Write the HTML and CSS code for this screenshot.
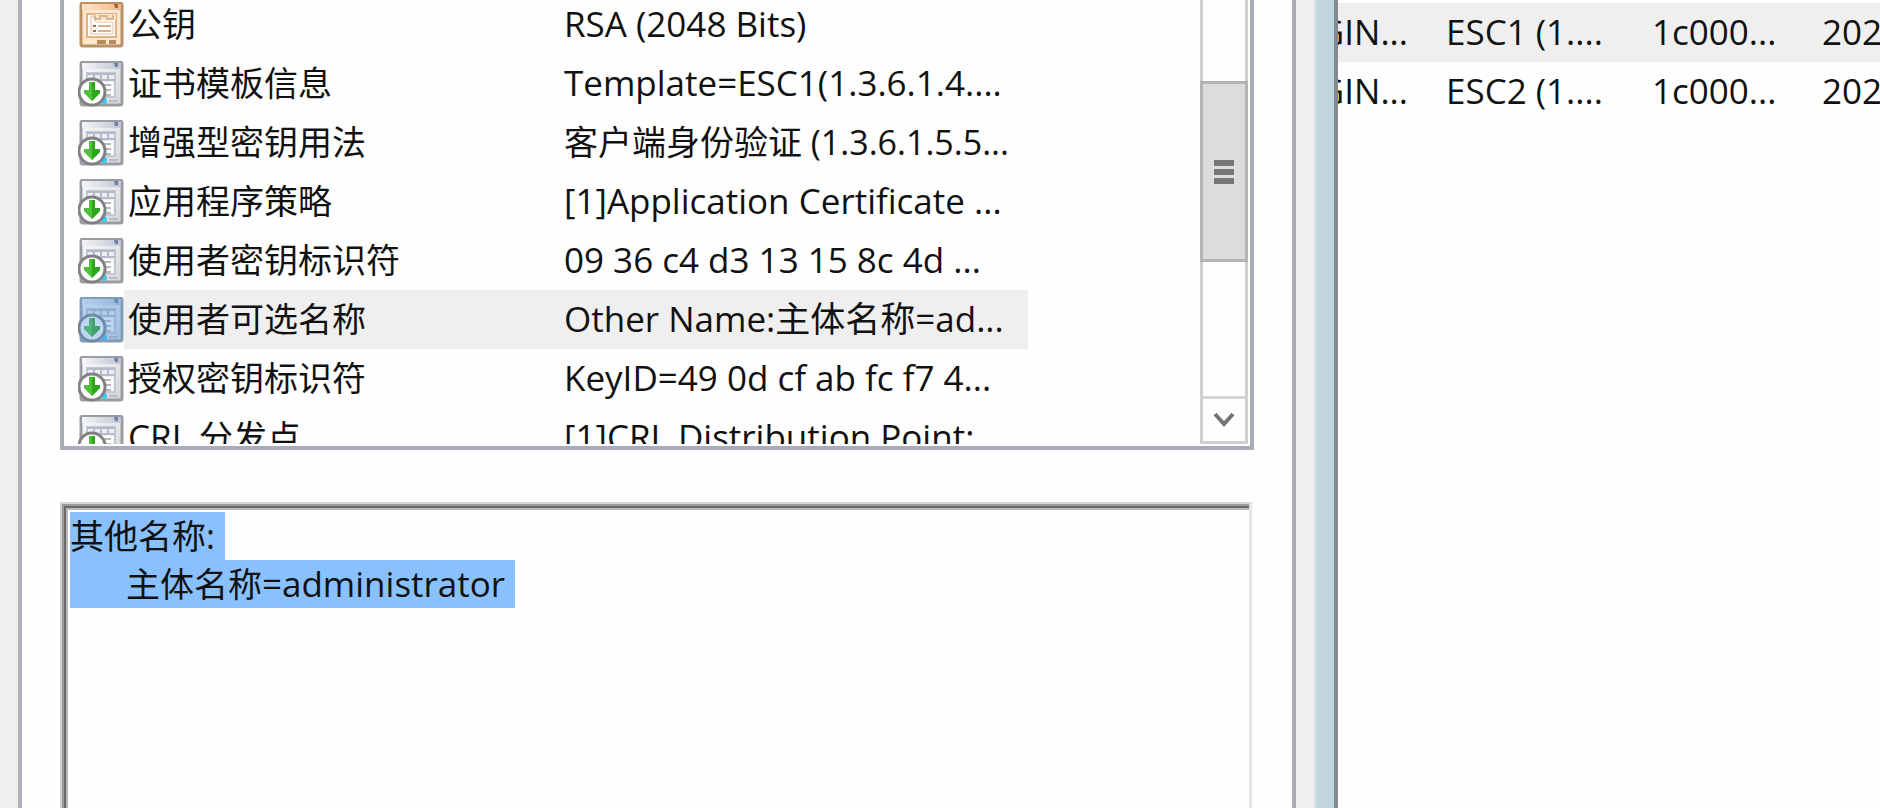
FILE: index.html
```html
<!DOCTYPE html>
<html lang="zh-CN">
<head>
<meta charset="utf-8">
<title>证书</title>
<link rel="stylesheet" href="styles.css">
</head>
<body>
<svg class="symbols" aria-hidden="true">
  <defs>
    <linearGradient id="greyBar" x1="0" y1="0" x2="1" y2="0"><stop offset="0" stop-color="#f4f5f7"/><stop offset="1" stop-color="#bfc5d2"/></linearGradient>
    <linearGradient id="greyBody" x1="0" y1="0" x2="1" y2="1"><stop offset="0" stop-color="#fafafa"/><stop offset="1" stop-color="#d3d5d8"/></linearGradient>
    <linearGradient id="orangeBar" x1="0" y1="0" x2="1" y2="0"><stop offset="0" stop-color="#fde3c8"/><stop offset="1" stop-color="#f3b98a"/></linearGradient>
    <symbol id="ext" viewBox="0 0 46 46">
      <rect x="3" y="1" width="41" height="43" rx="2" fill="url(#greyBody)" stroke="#999da2" stroke-width="3"/>
      <rect x="4" y="2" width="39" height="6" fill="url(#greyBar)"/>
      <path d="M36 2h4v4h-3z" fill="#6c7fa6"/>
      <path d="M9 12h28v24H9z" fill="#eceef1" stroke="#c3c8d2" stroke-width="2"/>
      <path d="M9 13h28M9 19h28M16 12v7M23 12v7M30 12v7" fill="none" stroke="#b4bac9" stroke-width="2"/>
      <path d="M24 21h11v14H22z" fill="#fff"/>
      <path d="M26 24h7M27 29h6M26 34h7" stroke="#b5b8bd" stroke-width="2"/>
      <path d="M31 40h9" stroke="#b9bcc0" stroke-width="2"/>
      <circle cx="26" cy="40" r="3" fill="#35cdf5"/>
      <circle cx="14" cy="31" r="13" fill="#fff" stroke="#7f8183" stroke-width="3"/>
      <path d="M11 21h6v8h5v3l-8 8-8-8v-3h5z" fill="#4fc136"/>
      <path d="M14 21h3v8h5v3l-8 8z" fill="#2fa51f"/>
    </symbol>
    <symbol id="prop" viewBox="0 0 46 46">
      <rect x="3" y="1" width="41" height="43" rx="2" fill="#fbe6d0" stroke="#b98f63" stroke-width="3"/>
      <rect x="4" y="2" width="39" height="6" fill="url(#orangeBar)"/>
      <path d="M36 2h4v4h-3z" fill="#a06b3c"/>
      <path d="M9 12h29v23H9z" fill="#fff" stroke="#dfb184" stroke-width="2"/>
      <path d="M16 12h22v6H18z" fill="#fae3cc"/>
      <path d="M13 14v18h22V20H18l-3-6z" fill="none" stroke="#e6bd95" stroke-width="1"/>
      <path d="M17 13v4h5v-3h7v3h6v-4" fill="none" stroke="#e0b48a" stroke-width="2"/>
      <path d="M20 24h13M20 29h13" stroke="#dcb185" stroke-width="2"/>
      <path d="M15 24h3M15 29h3" stroke="#a96e37" stroke-width="2"/>
      <path d="M19 40h9M31 40h7" stroke="#b98a5c" stroke-width="4"/>
    </symbol>
  </defs>
</svg>
<div class="screen">
  <section class="dialog">
    <div class="page">
      <div class="list">
        <div class="list-view">
          <table class="fields">
            <tbody>
              <tr><td class="name"><svg class="icon"><use href="#prop"/></svg><span>公钥</span></td><td class="value latin">RSA (2048 Bits)</td></tr>
              <tr><td class="name"><svg class="icon"><use href="#ext"/></svg><span>证书模板信息</span></td><td class="value latin">Template=ESC1(1.3.6.1.4....</td></tr>
              <tr><td class="name"><svg class="icon"><use href="#ext"/></svg><span>增强型密钥用法</span></td><td class="value">客户端身份验证 (1.3.6.1.5.5...</td></tr>
              <tr><td class="name"><svg class="icon"><use href="#ext"/></svg><span>应用程序策略</span></td><td class="value latin">[1]Application Certificate ...</td></tr>
              <tr><td class="name"><svg class="icon"><use href="#ext"/></svg><span>使用者密钥标识符</span></td><td class="value latin">09 36 c4 d3 13 15 8c 4d ...</td></tr>
              <tr class="selected"><td class="name"><svg class="icon"><use href="#ext"/><rect class="tint" x="2" width="43" height="45" rx="2"/></svg><span>使用者可选名称</span></td><td class="value latin">Other Name:主体名称=ad...</td></tr>
              <tr><td class="name"><svg class="icon"><use href="#ext"/></svg><span>授权密钥标识符</span></td><td class="value latin">KeyID=49 0d cf ab fc f7 4...</td></tr>
              <tr><td class="name"><svg class="icon"><use href="#ext"/></svg><span><span class="latin">CRL </span>分发点</span></td><td class="value latin">[1]CRL Distribution Point:</td></tr>
            </tbody>
          </table>
        </div>
        <div class="scrollbar">
          <div class="track">
            <div class="thumb"><i></i><i></i><i></i></div>
          </div>
          <button class="down" aria-label="向下滚动"><svg class="chevron" viewBox="0 0 22 16"><path d="M2 2l9 10 9-10" fill="none" stroke="#767676" stroke-width="4"/></svg></button>
        </div>
      </div>
      <div class="detail" role="textbox" aria-readonly="true" aria-multiline="true" aria-label="其他名称" tabindex="0">
        <div class="line"><span class="marked">其他名称:</span></div>
        <div class="line"><span class="marked indent">主体名称<span class="latin">=administrator</span></span></div>
      </div>
    </div>
    <div class="edge"></div>
    <div class="frame"></div>
  </section>
  <section class="issued">
    <table class="certs latin">
      <tbody>
        <tr class="selected"><td class="who"><div>GIN...</div></td><td class="tpl">ESC1 (1....</td><td class="serial">1c000...</td><td>202</td></tr>
        <tr><td class="who"><div>GIN...</div></td><td class="tpl">ESC2 (1....</td><td class="serial">1c000...</td><td>202</td></tr>
      </tbody>
    </table>
  </section>
</div>
</body>
</html>
```
FILE: styles.css
```css
* { box-sizing: border-box; }

body {
  margin: 0;
  background: #fefefe;
  color: #111;
  font-family: "Open Sans", "Noto Sans CJK SC", sans-serif;
  font-size: 34px;
  line-height: 48px;
  overflow: hidden;
}

.symbols { position: absolute; width: 0; height: 0; }

.latin { font-size: 35px; }

.screen {
  display: grid;
  grid-template-columns: minmax(0, 1338fr) minmax(0, 542fr);
  height: 100vh;
}

.dialog {
  display: flex;
  min-height: 0;
  border-left: 18px solid #efefef;
}

.page {
  display: flex;
  flex-direction: column;
  flex: 1;
  min-width: 0;
  padding: 0 38px;
  border-left: 4px solid #b0b1b8;
  border-right: 4px solid #acacb2;
}

.edge { width: 18px; background: #efefef; }

.frame {
  width: 24px;
  background: #c1d5dc;
  border-left: 2px solid #d9e2e6;
  border-right: 4px solid #85888e;
}

.list {
  display: flex;
  height: 450px;
  border: 4px solid #a9adb7;
  border-top: 0;
  padding: 0 2px 2px 0;
}

.list-view { flex: 1; min-width: 0; height: 444px; overflow: hidden; }

table { border-collapse: collapse; }

.fields { width: 964px; margin-top: -5px; }

td { height: 59px; padding: 0 0 2px; white-space: nowrap; }

.name {
  display: flex;
  align-items: center;
  gap: 4px;
  width: 500px;
  padding: 0 0 0 14px;
}

.name > span { padding-bottom: 2px; }

.value { width: 464px; }

.selected { background: #efefef; }

.fields .selected { background: linear-gradient(90deg, #fefefe 60px, #efefef 60px); }

.icon { width: 46px; height: 46px; flex: none; }

.tint { fill: #5b9be0; opacity: 0.4; }

.scrollbar {
  display: flex;
  flex-direction: column;
  width: 48px;
  border: 3px solid #d0d0d0;
  border-top: 0;
}

.track { flex: 1; padding-top: 81px; }

.thumb {
  display: flex;
  flex-direction: column;
  align-items: center;
  justify-content: center;
  gap: 3px;
  height: 181px;
  margin: 0 -3px;
  background: #dcdcdc;
  border: 3px solid #b4b4b4;
}

.thumb i { width: 20px; height: 6px; background: #767676; }

.down {
  display: grid;
  place-items: center;
  height: 45px;
  padding: 0;
  background: #fefefe;
  border: 0;
  border-top: 3px solid #d4d4d4;
}

.chevron { width: 22px; height: 16px; }

.detail {
  flex: 1;
  margin: 52px 2px 0 0;
  padding: 8px 2px 2px;
  border-left: 2px solid #cfcfcf;
  border-top: 2px solid #d8d8d8;
  border-right: 3px solid #e4e4e4;
  padding-left: 8px;
  box-shadow:
    inset 2px 2px #999,
    inset 4px 4px #6b6b6b,
    inset 6px 6px #b9b9b9;
}

.line { height: 48px; }

.marked {
  display: inline-block;
  height: 48px;
  padding-right: 10px;
  background: #89c1ff;
}

.indent { padding-left: 56px; }

.issued { overflow: hidden; }

.certs { width: 100%; table-layout: fixed; margin-top: 3px; }

.who { width: 108px; }

.who div { display: flex; justify-content: flex-end; width: 70px; overflow: hidden; }

.tpl { width: 206px; }

.serial { width: 170px; }
```
